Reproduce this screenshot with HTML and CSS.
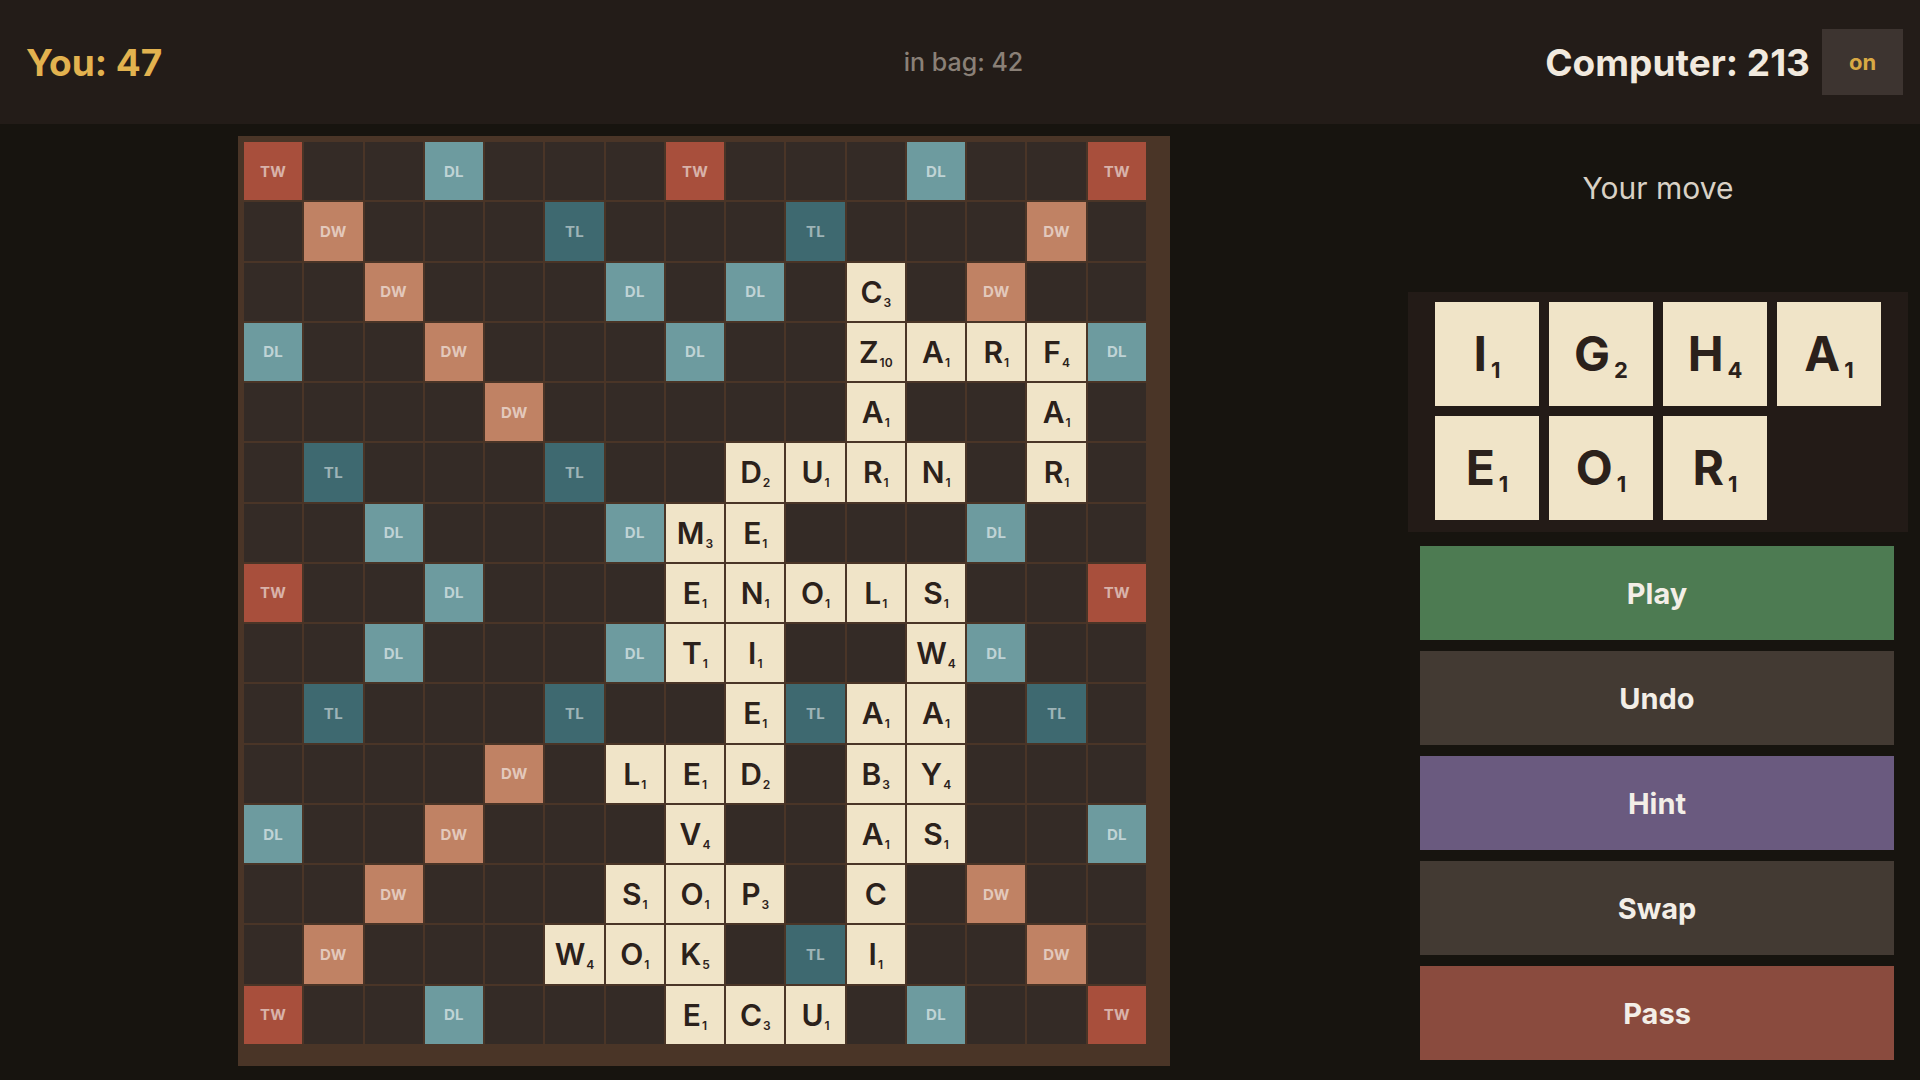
FILE: index.html
```html
<!DOCTYPE html>
<html lang="en">
<head>
<meta charset="utf-8">
<title>Scrabble</title>
<link rel="stylesheet" href="styles.css">
</head>
<body>
<header class="topbar">
  <div class="score you">You: 47</div>
  <div class="bag">in bag: 42</div>
  <div class="right">
    <div class="score comp">Computer: 213</div>
    <button class="toggle">on</button>
  </div>
</header>
<main class="game">
  <section class="board-wrap">
    <div class="board">
      <!-- row 0 -->
      <div class="sq tw">TW</div><div class="sq"></div><div class="sq"></div><div class="sq dl">DL</div><div class="sq"></div><div class="sq"></div><div class="sq"></div><div class="sq tw">TW</div><div class="sq"></div><div class="sq"></div><div class="sq"></div><div class="sq dl">DL</div><div class="sq"></div><div class="sq"></div><div class="sq tw">TW</div>
      <!-- row 1 -->
      <div class="sq"></div><div class="sq dw">DW</div><div class="sq"></div><div class="sq"></div><div class="sq"></div><div class="sq tl">TL</div><div class="sq"></div><div class="sq"></div><div class="sq"></div><div class="sq tl">TL</div><div class="sq"></div><div class="sq"></div><div class="sq"></div><div class="sq dw">DW</div><div class="sq"></div>
      <!-- row 2 -->
      <div class="sq"></div><div class="sq"></div><div class="sq dw">DW</div><div class="sq"></div><div class="sq"></div><div class="sq"></div><div class="sq dl">DL</div><div class="sq"></div><div class="sq dl">DL</div><div class="sq"></div><div class="sq t">C<sub>3</sub></div><div class="sq"></div><div class="sq dw">DW</div><div class="sq"></div><div class="sq"></div>
      <!-- row 3 -->
      <div class="sq dl">DL</div><div class="sq"></div><div class="sq"></div><div class="sq dw">DW</div><div class="sq"></div><div class="sq"></div><div class="sq"></div><div class="sq dl">DL</div><div class="sq"></div><div class="sq"></div><div class="sq t">Z<sub>10</sub></div><div class="sq t">A<sub>1</sub></div><div class="sq t">R<sub>1</sub></div><div class="sq t">F<sub>4</sub></div><div class="sq dl">DL</div>
      <!-- row 4 -->
      <div class="sq"></div><div class="sq"></div><div class="sq"></div><div class="sq"></div><div class="sq dw">DW</div><div class="sq"></div><div class="sq"></div><div class="sq"></div><div class="sq"></div><div class="sq"></div><div class="sq t">A<sub>1</sub></div><div class="sq"></div><div class="sq"></div><div class="sq t">A<sub>1</sub></div><div class="sq"></div>
      <!-- row 5 -->
      <div class="sq"></div><div class="sq tl">TL</div><div class="sq"></div><div class="sq"></div><div class="sq"></div><div class="sq tl">TL</div><div class="sq"></div><div class="sq"></div><div class="sq t">D<sub>2</sub></div><div class="sq t">U<sub>1</sub></div><div class="sq t">R<sub>1</sub></div><div class="sq t">N<sub>1</sub></div><div class="sq"></div><div class="sq t">R<sub>1</sub></div><div class="sq"></div>
      <!-- row 6 -->
      <div class="sq"></div><div class="sq"></div><div class="sq dl">DL</div><div class="sq"></div><div class="sq"></div><div class="sq"></div><div class="sq dl">DL</div><div class="sq t">M<sub>3</sub></div><div class="sq t">E<sub>1</sub></div><div class="sq"></div><div class="sq"></div><div class="sq"></div><div class="sq dl">DL</div><div class="sq"></div><div class="sq"></div>
      <!-- row 7 -->
      <div class="sq tw">TW</div><div class="sq"></div><div class="sq"></div><div class="sq dl">DL</div><div class="sq"></div><div class="sq"></div><div class="sq"></div><div class="sq t">E<sub>1</sub></div><div class="sq t">N<sub>1</sub></div><div class="sq t">O<sub>1</sub></div><div class="sq t">L<sub>1</sub></div><div class="sq t">S<sub>1</sub></div><div class="sq"></div><div class="sq"></div><div class="sq tw">TW</div>
      <!-- row 8 -->
      <div class="sq"></div><div class="sq"></div><div class="sq dl">DL</div><div class="sq"></div><div class="sq"></div><div class="sq"></div><div class="sq dl">DL</div><div class="sq t">T<sub>1</sub></div><div class="sq t">I<sub>1</sub></div><div class="sq"></div><div class="sq"></div><div class="sq t">W<sub>4</sub></div><div class="sq dl">DL</div><div class="sq"></div><div class="sq"></div>
      <!-- row 9 -->
      <div class="sq"></div><div class="sq tl">TL</div><div class="sq"></div><div class="sq"></div><div class="sq"></div><div class="sq tl">TL</div><div class="sq"></div><div class="sq"></div><div class="sq t">E<sub>1</sub></div><div class="sq tl">TL</div><div class="sq t">A<sub>1</sub></div><div class="sq t">A<sub>1</sub></div><div class="sq"></div><div class="sq tl">TL</div><div class="sq"></div>
      <!-- row 10 -->
      <div class="sq"></div><div class="sq"></div><div class="sq"></div><div class="sq"></div><div class="sq dw">DW</div><div class="sq"></div><div class="sq t">L<sub>1</sub></div><div class="sq t">E<sub>1</sub></div><div class="sq t">D<sub>2</sub></div><div class="sq"></div><div class="sq t">B<sub>3</sub></div><div class="sq t">Y<sub>4</sub></div><div class="sq"></div><div class="sq"></div><div class="sq"></div>
      <!-- row 11 -->
      <div class="sq dl">DL</div><div class="sq"></div><div class="sq"></div><div class="sq dw">DW</div><div class="sq"></div><div class="sq"></div><div class="sq"></div><div class="sq t">V<sub>4</sub></div><div class="sq"></div><div class="sq"></div><div class="sq t">A<sub>1</sub></div><div class="sq t">S<sub>1</sub></div><div class="sq"></div><div class="sq"></div><div class="sq dl">DL</div>
      <!-- row 12 -->
      <div class="sq"></div><div class="sq"></div><div class="sq dw">DW</div><div class="sq"></div><div class="sq"></div><div class="sq"></div><div class="sq t">S<sub>1</sub></div><div class="sq t">O<sub>1</sub></div><div class="sq t">P<sub>3</sub></div><div class="sq"></div><div class="sq t">C</div><div class="sq"></div><div class="sq dw">DW</div><div class="sq"></div><div class="sq"></div>
      <!-- row 13 -->
      <div class="sq"></div><div class="sq dw">DW</div><div class="sq"></div><div class="sq"></div><div class="sq"></div><div class="sq t">W<sub>4</sub></div><div class="sq t">O<sub>1</sub></div><div class="sq t">K<sub>5</sub></div><div class="sq"></div><div class="sq tl">TL</div><div class="sq t">I<sub>1</sub></div><div class="sq"></div><div class="sq"></div><div class="sq dw">DW</div><div class="sq"></div>
      <!-- row 14 -->
      <div class="sq tw">TW</div><div class="sq"></div><div class="sq"></div><div class="sq dl">DL</div><div class="sq"></div><div class="sq"></div><div class="sq"></div><div class="sq t">E<sub>1</sub></div><div class="sq t">C<sub>3</sub></div><div class="sq t">U<sub>1</sub></div><div class="sq"></div><div class="sq dl">DL</div><div class="sq"></div><div class="sq"></div><div class="sq tw">TW</div>
    </div>
  </section>
  <aside class="panel">
    <div class="status">Your move</div>
    <div class="rack">
      <div class="rtile">I<sub>1</sub></div>
      <div class="rtile">G<sub>2</sub></div>
      <div class="rtile">H<sub>4</sub></div>
      <div class="rtile">A<sub>1</sub></div>
      <div class="rtile">E<sub>1</sub></div>
      <div class="rtile">O<sub>1</sub></div>
      <div class="rtile">R<sub>1</sub></div>
    </div>
    <div class="actions">
      <button class="btn play">Play</button>
      <button class="btn undo">Undo</button>
      <button class="btn hint">Hint</button>
      <button class="btn swap">Swap</button>
      <button class="btn pass">Pass</button>
    </div>
  </aside>
</main>
</body>
</html>
```
FILE: styles.css
```css
* { box-sizing: border-box; }

html, body {
  margin: 0;
  padding: 0;
  background: #17140f;
  font-family: "Inter", "Liberation Sans", sans-serif;
  color: #efe7dc;
}

.topbar {
  height: 124px;
  background: #231c18;
  display: grid;
  grid-template-columns: 1fr auto 1fr;
  align-items: center;
  padding: 0 17px 0 24px;
}

.score {
  font-size: 37px;
  font-weight: 700;
}

.you { color: #e2b24f; justify-self: start; padding-left: 2px; }
.comp { color: #f1e9de; }

.bag {
  font-size: 25px;
  font-weight: 500;
  color: #8a8077;
}

.right {
  justify-self: end;
  display: flex;
  align-items: center;
  gap: 12px;
}

.toggle {
  height: 66px;
  width: 81px;
  border: none;
  background: #3d3430;
  color: #d9a944;
  font-family: inherit;
  font-size: 22px;
  font-weight: 700;
  padding: 0;
}

.game {
  display: grid;
  grid-template-columns: 1fr 500px;
  gap: 12px;
  padding: 12px;
}

.board-wrap {
  display: flex;
  justify-content: center;
  align-items: flex-start;
}

.board {
  background: #4a3527;
  padding: 6px 24px 22px 6px;
  display: grid;
  grid-template-columns: repeat(15, 1fr);
  gap: 2px;
  width: 932px;
}

.sq {
  aspect-ratio: 1 / 1;
  background: #342b26;
  display: flex;
  align-items: center;
  justify-content: center;
  font-size: 15px;
  font-weight: 700;
  letter-spacing: 0.3px;
  color: rgba(255, 255, 255, 0.58);
}

.tw { background: #a84f3c; }
.dw { background: #c08264; }
.dl { background: #6d9b9f; }
.tl { background: #3e6970; color: rgba(255, 255, 255, 0.5); }

.sq.t {
  display: block;
  background: #f0e4c8;
  color: #2b211b;
  text-align: center;
  line-height: 58px;
  font-size: 30px;
  font-weight: 600;
  letter-spacing: 0;
}

.sq.t sub {
  font-size: 12px;
  vertical-align: -4px;
  margin-left: 1px;
  line-height: 0;
}

.panel {
  display: flex;
  flex-direction: column;
}

.status {
  padding-top: 34px;
  height: 156px;
  text-align: center;
  font-size: 30px;
  line-height: 36px;
  font-weight: 400;
  color: #d9d1c5;
}

.rack {
  background: #231b17;
  height: 240px;
  padding: 10px 0 12px;
  display: grid;
  grid-template-columns: repeat(4, 104px);
  grid-auto-rows: 104px;
  gap: 10px;
  justify-content: center;
  align-content: start;
}

.rtile {
  background: #f0e4c8;
  color: #2b211b;
  text-align: center;
  line-height: 104px;
  font-size: 48px;
  font-weight: 700;
}

.rtile sub {
  font-size: 22px;
  vertical-align: -7px;
  margin-left: 4px;
  line-height: 0;
}

.actions {
  margin: 14px 14px 0 12px;
  display: flex;
  flex-direction: column;
  gap: 11px;
}

.btn {
  height: 94px;
  border: none;
  padding: 0;
  font-family: inherit;
  font-size: 29px;
  font-weight: 700;
  color: #f3eee7;
}

.play { background: #4d7b52; }
.undo, .swap { background: #433a33; }
.hint { background: #6a5a7f; }
.pass { background: #8a4b3e; }
```
